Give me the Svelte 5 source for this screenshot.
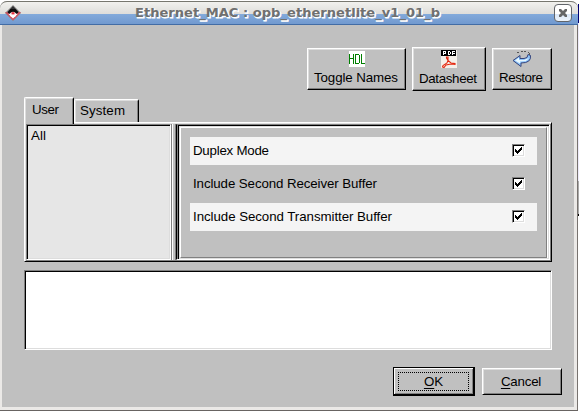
<script>
  const options = ['Duplex Mode', 'Include Second Receiver Buffer', 'Include Second Transmitter Buffer'];
  let checked = $state([true, true, true]);
</script>

<div class="screen">
  <div class="window">
    <header>
      <svg class="appicon" width="17" height="17" viewBox="0 0 17 17">
        <path d="M8 0L16 8L8 16L0 8Z" fill="#8a8a8a" /><path d="M8 1L14.5 8H1.5Z" fill="#333" />
        <path d="M1.5 8H14.5L8 14.5Z" fill="#fff" stroke="#d05060" stroke-width="1.3" />
        <path d="M3 7L5.5 4H10.5L13 7V8L11 9H5L3 8Z" fill="#0c0c0c" /><path d="M4.5 9Q8 4.5 11.5 9L10 12H6Z" fill="#fff" /><rect x="6.5" y="7.2" width="3" height="2.2" fill="#e32b37" />
      </svg>
      <svg class="title" width="310" height="20" viewBox="0 0 310 20">
        <text class="shade" x="2" y="13" textLength="305" lengthAdjust="spacingAndGlyphs">Ethernet_MAC : opb_ethernetlite_v1_01_b</text>
        <text class="face" x="1" y="12" textLength="305" lengthAdjust="spacingAndGlyphs">Ethernet_MAC : opb_ethernetlite_v1_01_b</text>
      </svg>
      <button class="close" aria-label="Close">
        <svg width="10" height="10" viewBox="0 0 10 10"><path d="M1 1H3L5 3L7 1H9V3L7 5L9 7V9H7L5 7L3 9H1V7L3 5L1 3Z" fill="#666" /></svg>
      </button>
    </header>

    <main>
      <div class="toolbar">
        <button class="tool names">
          <svg width="16" height="16"><rect width="16" height="16" fill="#fff" /><path d="M.5 3V13M4.5 3V13M1 7.5H4M6.5 3V13M7 3.5H9.5M10.5 4V12M7 12.5H9.5M12.5 3V12.5H16" fill="none" stroke="#008000" shape-rendering="crispEdges" /></svg>
          <svg class="label" width="86" height="17"><text x="0" y="13" textLength="84">Toggle Names</text></svg>
        </button>
        <button class="tool sheet">
          <svg width="16" height="18"><rect width="16" height="18" fill="#f5f0e9" /><path d="M0 0H15V6H0Z" fill="#000" /><path d="M2.5 5V1.5H4.5V3.5H3M7.5 1V4.5H8.5L9.5 3.5V2.5L8.5 1.5H7M11.5 5V1.5H14M12 3.5H14" fill="none" stroke="#fff" shape-rendering="crispEdges" /><path d="M5.5 7H7V10.5L10 13L14 13.5V14.5L10 14L5 15L3 17.5L1.5 17L2 15.5L6 13L7 10.5L5.5 8Z" fill="none" stroke="#e52910" stroke-width="1.1" /></svg>
          <svg class="label" width="62" height="17"><text x="1" y="13" textLength="58">Datasheet</text></svg>
        </button>
        <button class="tool restore">
          <svg width="20" height="17"><path d="M1 9.5L8 4.5V7.5H12Q16 7.5 16 3.5L18.5 4.5Q19.5 12 9 12V15.5Z" fill="#8cc4fa" stroke="#34437c" /><path d="M3 9.5L7 6.5V9H12L17 7L14 10L8 10.5V12.5Z" fill="#e9f8ff" /><path d="M5 1.5H8M9 .5H15M16 1.5H17M17.5 2V4" fill="none" stroke="#555" stroke-dasharray="2 1" /></svg>
          <svg class="label" width="49" height="17"><text x="1" y="13" textLength="44">Restore</text></svg>
        </button>
      </div>

      <nav>
        <button class="tab active"><svg width="32" height="17"><text x="0" y="13" textLength="27">User</text></svg></button>
        <button class="tab system"><svg width="50" height="17"><text x="0" y="13" textLength="45">System</text></svg></button>
      </nav>
      <section class="panel">
        <div class="list"><svg width="30" height="17"><text x="0" y="13" textLength="15">All</text></svg></div>
        <div class="splitter"></div>
        <div class="frame"><div class="options">
          {#each options as option, i}
            <label class:striped={i % 2 === 0}>
              <svg width="220" height="18"><text x="0" y="13" textLength={[76, 184, 199][i]}>{option}</text></svg>
              <input type="checkbox" bind:checked={checked[i]} />
              <span class="check">
                {#if checked[i]}<svg width="9" height="9" viewBox="0 0 9 9" shape-rendering="crispEdges"><path d="M1 3h1v1h1v1h1v-1h1v-1h1v-1h1v-1h1v3h-1v1h-1v1h-1v1h-1v1h-1v-1h-1v-1h-1z" /></svg>{/if}
              </span>
            </label>
          {/each}
        </div></div>
      </section>

      <section class="message"></section>
      <footer>
        <button class="ok"><span><u>O</u>K</span></button>
        <button class="cancel"><span><u>C</u>ancel</span></button>
      </footer>
    </main>
  </div>
  <aside></aside>
</div>

<style>
  :global(body) { margin: 0; background: #fff; }
  * { box-sizing: border-box; }
  button { appearance: none; margin: 0; padding: 0; border: 0; background: #c0c0c0; color: #000; }
  svg { display: block; flex: none; overflow: visible; }
  .screen { width: 579px; height: 412px; display: flex; padding-top: 1px; overflow: hidden; font: 13.3px "Liberation Sans", Arial, sans-serif; color: #000; }
  .window { width: 578px; height: 410px; flex: none; background: #c0c0c0; border-bottom: 1px solid #686462; border-radius: 7px 7px 0 0; display: flex; flex-direction: column; }
  header { height: 24px; flex: none; border-top: 1px solid #77776f; border-bottom: 1px solid #426ca5; border-radius: 7px 7px 0 0; background: linear-gradient(#f1f1ee 0, #deddda 12px, #83aadb 12px, #7199cf 100%); display: flex; align-items: flex-start; }
  .appicon { margin: 3px 0 0 5px; }
  .title { margin: 3px 0 0 112px; }
  .title text { font: bold 12.7px "DejaVu Sans", sans-serif; }
  .shade { fill: #fff; stroke: #fff; stroke-width: 1px; }
  .face { fill: #707070; }
  .close { width: 18px; height: 18px; margin: 2px 0 0 110px; border: 1px solid #62656a; border-radius: 4px; background: linear-gradient(#fff 0 9px, #d9e6f6 9px, #eef4fb); display: grid; place-items: center; }
  main { flex: 1; min-height: 0; border: solid #ebe9e7; border-width: 0 3px 3px 2px; box-shadow: 1px 0 #77726f; margin-right: 1px; padding: 22px 0 0 22px; display: flex; flex-direction: column; }
  aside { width: 1px; height: 411px; background: linear-gradient(#fff 0 3px, #000073 3px 22px, #edeafa 22px 180px, #aaa 180px 213px, #000 213px 215px, #fff 215px); }
  .toolbar { height: 44px; display: flex; align-items: center; padding-left: 283px; gap: 6px; }
  .tool { flex: none; border: 1px solid; border-color: #fff #000 #000 #fff; box-shadow: inset -1px -1px #808080, inset 1px 1px #ddd; display: flex; flex-direction: column; align-items: center; justify-content: flex-start; }
  .names { width: 99px; height: 42px; padding-top: 2px; }
  .names .label { margin-top: 2px; }
  .sheet { width: 74px; height: 44px; padding-top: 2px; }
  .sheet .label { margin-top: 2px; }
  .restore { width: 60px; height: 42px; padding-top: 2px; }
  .restore .label { margin: 1px 0 0 0; }
  nav { height: 25px; margin-top: 6px; display: flex; align-items: flex-end; flex: none; z-index: 1; }
  .tab { display: flex; align-items: flex-start; border: solid; border-width: 1px 1px 0; border-color: #fff #000 #000 #fff; border-radius: 2px 2px 0 0; box-shadow: inset 1px 1px #ddd, inset -1px 0 #808080; }
  .active { width: 50px; height: 27px; margin-bottom: -2px; padding: 3px 0 0 7px; }
  .system { width: 65px; height: 23px; padding: 2px 0 0 5px; }
  .panel { width: 528px; height: 140px; flex: none; border: solid; border-width: 1px; border-color: #fff #000 #000 #fff; box-shadow: inset 1px 1px #e0e0e0, inset -1px -1px #808080; display: flex; padding: 1px; }
  .list { width: 145px; height: 136px; flex: none; background: #e6e6e6; border: solid; border-width: 1px; border-color: #808080 #fff #fff #808080; box-shadow: inset 1px 1px #000, inset -1px -1px #ddd; padding: 2px 0 0 4px; }
  .splitter { width: 5px; height: 136px; flex: none; border-left: 1px solid #808080; box-shadow: inset 1px 0 #fff; border-right: 1px solid #808080; background: #c0c0c0; }
  .frame { width: 374px; height: 136px; flex: none; border: 1px solid; border-color: #808080 #fff #fff #000; padding: 2px 2px 2px 3px; box-shadow: inset 1px 0 #808080, inset 0 1px #000, inset 2px 0 #000, inset -1px -1px #ddd, inset 3px 2px #ddd, inset -2px -2px #fff; }
  .options { height: 131px; border: 1px solid; border-color: #fff #808080 #808080 #fff; padding: 9px; background: #c0c0c0; }
  .options label { height: 28px; margin-bottom: 5px; padding: 0 12px 0 3px; display: flex; align-items: center; justify-content: space-between; }
  label.striped { background: #f4f4f4; }
  input { width: 1px; height: 1px; margin: 0; opacity: 0; }
  .check { width: 13px; height: 13px; margin-top: -1px; border: 1px solid; border-color: #808080 #fff #fff #808080; background: #fff; box-shadow: inset 1px 1px #000, inset -1px -1px #ddd; padding: 1px; }
  .message { width: 528px; height: 80px; margin-top: 8px; flex: none; background: #fff; border: 1px solid; border-color: #808080 #fff #fff #808080; box-shadow: inset 1px 1px #000, inset -1px -1px #ddd; }
  footer { display: flex; gap: 7px; padding-left: 369px; margin-top: 17px; align-items: center; flex: none; }
  footer button { font: inherit; flex: none; }
  .ok { width: 82px; height: 29px; border: solid #000; border-width: 1px 2px 2px 1px; padding: 4px; box-shadow: inset 1px 1px #fff, inset -1px -1px #808080; }
  .ok span { height: 19px; border: 1px dotted #000; display: grid; grid-auto-flow: column; place-content: center; align-items: center; }
  .cancel { width: 80px; height: 27px; border: 1px solid; border-color: #fff #000 #000 #fff; box-shadow: inset 1px 1px #ddd, inset -1px -1px #808080; }
  .cancel span { letter-spacing: -0.2px; margin-right: 2px; }
  u { text-underline-offset: 2px; text-decoration-thickness: 1px; }
</style>
